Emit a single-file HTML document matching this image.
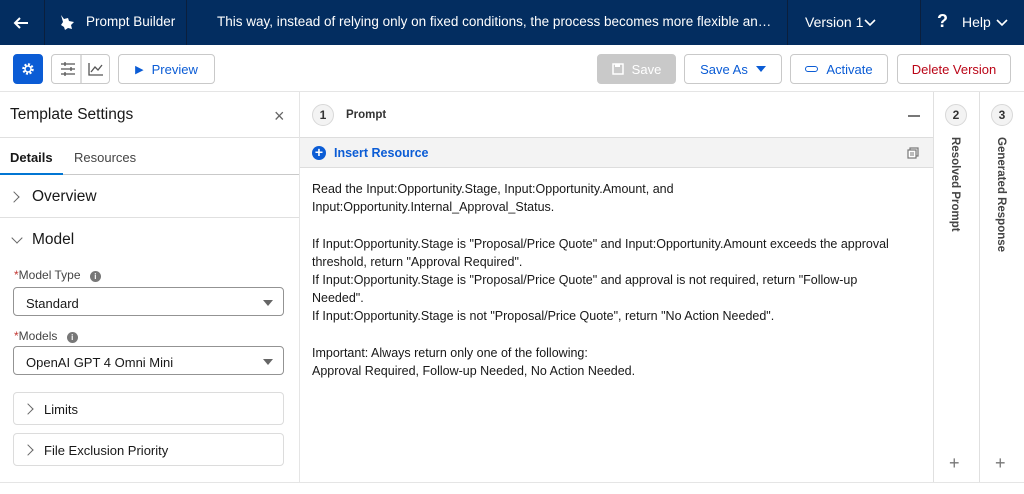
<!DOCTYPE html>
<html><head><meta charset="utf-8"><style>
*{box-sizing:border-box;margin:0;padding:0}
body{width:1024px;height:494px;overflow:hidden;background:#fff;font-family:"Liberation Sans",Arial,sans-serif;color:#181818;position:relative}
.abs{position:absolute}
.hdr{left:0;top:0;width:1024px;height:45px;background:#032d60;color:#fff;font-size:14px}
.hdr .sep{position:absolute;top:0;width:1px;height:45px;background:#0b1f3d}
.hdr span{position:absolute;top:14px;white-space:nowrap}
.btn{position:absolute;top:54px;height:30px;border:1px solid #c9c9c9;border-radius:4px;background:#fff;font-size:13px;color:#0b5cd5;display:flex;align-items:center;justify-content:center;gap:8px}
.tb{left:0;top:91px;width:1024px;height:1px;background:#e5e5e5}
.lbl{font-size:12px;color:#444}
.sel{position:absolute;left:13px;width:271px;height:29px;border:1px solid #939393;border-radius:4px;font-size:13px;padding:8px 12px}
.sel:after{content:"";position:absolute;right:10px;top:12px;border-left:5px solid transparent;border-right:5px solid transparent;border-top:6px solid #666}
.box{position:absolute;left:13px;width:271px;height:33px;border:1px solid #dcdcdc;border-radius:4px;font-size:13px;padding:9px 0 0 30px}
.chev{position:absolute;width:8px;height:8px;border-right:1.5px solid #666;border-bottom:1.5px solid #666}
.txt{left:312px;top:180px;font-size:12.5px;line-height:18.2px;color:#181818;white-space:pre}
.circ{position:absolute;width:22px;height:22px;border-radius:50%;border:1px solid #d8d8d8;background:#f3f3f3;font-size:12px;font-weight:bold;text-align:center;line-height:20px;color:#333}
.vt{position:absolute;writing-mode:vertical-rl;font-size:11.5px;font-weight:bold;color:#444}
</style></head><body>
<div class="abs hdr">
 <div class="sep" style="left:44px"></div><div class="sep" style="left:186px"></div><div class="sep" style="left:787px"></div><div class="sep" style="left:920px"></div>
 <svg class="abs" style="left:12px;top:14px" width="18" height="18" viewBox="0 0 18 18"><path d="M16 9H3M8 4L3 9l5 5" stroke="#fff" stroke-width="2" fill="none"/></svg>
 <svg class="abs" style="left:58px;top:13px" width="18" height="18" viewBox="0 0 18 18"><path d="M3 2l3 4 4-1 1 3 5 1-3 3 1 4-4-1-3 2-1-3-3-2 2-3z" fill="#fff"/></svg>
 <span style="left:86px;font-size:13.5px">Prompt Builder</span>
 <span style="left:217px;width:555px;overflow:hidden;text-overflow:ellipsis;font-size:13.5px">This way, instead of relying only on fixed conditions, the process becomes more flexible and capable of handling</span>
 <span style="left:805px">Version 1</span>
 <svg class="abs" style="left:864px;top:19px" width="12" height="8"><path d="M1 1l5 5 5-5" stroke="#fff" stroke-width="1.6" fill="none"/></svg>
 <span style="left:937px;font-size:18px;top:11px;font-weight:bold">?</span>
 <span style="left:962px">Help</span>
 <svg class="abs" style="left:996px;top:19px" width="12" height="8"><path d="M1 1l5 5 5-5" stroke="#fff" stroke-width="1.6" fill="none"/></svg>
</div>
<div class="btn" style="left:13px;width:30px;background:#0b5cd5;border-color:#0b5cd5"><svg width="14" height="14" viewBox="0 0 14 14"><circle cx="7" cy="7" r="4.5" fill="none" stroke="#fff" stroke-width="2.5" stroke-dasharray="2 1.5"/><circle cx="7" cy="7" r="3" fill="none" stroke="#fff" stroke-width="1.5"/></svg></div>
<div class="btn" style="left:51px;width:59px;color:#555"><svg width="58" height="28"><g stroke="#555" stroke-width="1.3"><path d="M9 9h14M9 14h14M9 19h14M13 7v4M19 12v4M13 17v4"/><path d="M29 0v28" stroke="#c9c9c9"/><path d="M37 8v12h14M39 17l4-5 3 3 4-5" fill="none"/></g></svg></div>
<div class="btn" style="left:118px;width:97px"><span style="font-size:11px">▶</span>Preview</div>
<div class="btn" style="left:597px;width:79px;background:#c9c9c9;border-color:#c9c9c9;color:#fff">
<svg width="12" height="12"><rect x="1" y="1" width="10" height="10" fill="none" stroke="#fff" stroke-width="1.5"/><rect x="3" y="1" width="5" height="3" fill="#fff"/></svg>Save</div>
<div class="btn" style="left:684px;width:98px">Save As <span style="border-left:5px solid transparent;border-right:5px solid transparent;border-top:6px solid #0b5cd5"></span></div>
<div class="btn" style="left:790px;width:98px"><span style="width:13px;height:6px;border:1.5px solid #0b5cd5;border-radius:3px"></span>Activate</div>
<div class="btn" style="left:897px;width:114px;color:#ba0517">Delete Version</div>
<div class="abs tb"></div>

<div class="abs" style="left:299px;top:92px;width:1px;height:390px;background:#e5e5e5"></div>
<div class="abs" style="left:0;top:482px;width:1024px;height:1px;background:#e5e5e5"></div>
<div class="abs" style="left:10px;top:106px;font-size:15.5px">Template Settings</div>
<div class="abs" style="left:274px;top:106px;font-size:18px;color:#666">×</div>
<div class="abs" style="left:0;top:137px;width:299px;height:1px;background:#e0e0e0"></div>
<div class="abs" style="left:10px;top:150px;font-size:13px;font-weight:bold">Details</div>
<div class="abs" style="left:74px;top:150px;font-size:13px;color:#444">Resources</div>
<div class="abs" style="left:0;top:174px;width:299px;height:1px;background:#c9c9c9"></div>
<div class="abs" style="left:0;top:173px;width:63px;height:2px;background:#0176d3"></div>
<div class="chev" style="left:10px;top:193px;transform:rotate(-45deg)"></div>
<div class="abs" style="left:32px;top:188px;font-size:15.5px">Overview</div>
<div class="abs" style="left:0;top:217px;width:299px;height:1px;background:#e0e0e0"></div>
<div class="chev" style="left:13px;top:234px;transform:rotate(45deg)"></div>
<div class="abs" style="left:32px;top:231px;font-size:15.5px">Model</div>
<div class="abs lbl" style="left:14px;top:268px"><span style="color:#c23934">*</span>Model Type <span style="display:inline-block;width:11px;height:11px;border-radius:50%;background:#777;color:#fff;font-size:8px;text-align:center;line-height:11px;margin-left:6px;font-weight:bold">i</span></div>
<div class="sel" style="top:287px">Standard</div>
<div class="abs lbl" style="left:14px;top:329px"><span style="color:#c23934">*</span>Models <span style="display:inline-block;width:11px;height:11px;border-radius:50%;background:#777;color:#fff;font-size:8px;text-align:center;line-height:11px;margin-left:6px;font-weight:bold">i</span></div>
<div class="sel" style="top:346px">OpenAI GPT 4 Omni Mini</div>
<div class="box" style="top:392px">Limits</div>
<div class="chev" style="left:24px;top:405px;transform:rotate(-45deg)"></div>
<div class="box" style="top:433px">File Exclusion Priority</div>
<div class="chev" style="left:24px;top:446px;transform:rotate(-45deg)"></div>

<div class="circ" style="left:312px;top:104px">1</div>
<div class="abs" style="left:346px;top:109px;font-size:11.5px;font-weight:bold;color:#333">Prompt</div>
<div class="abs" style="left:908px;top:115px;width:12px;height:1.5px;background:#777"></div>
<div class="abs" style="left:300px;top:137px;width:633px;height:31px;background:#f3f3f3;border-top:1px solid #ddd;border-bottom:1px solid #ddd"></div>
<div class="abs" style="left:312px;top:146px;width:14px;height:14px;border-radius:50%;background:#0b5cd5;color:#fff;font-size:14px;line-height:13px;text-align:center;font-weight:bold">+</div>
<div class="abs" style="left:334px;top:146px;font-size:12.5px;font-weight:bold;color:#0b5cd5">Insert Resource</div>
<svg class="abs" style="left:907px;top:147px" width="12" height="12"><rect x="3" y="1" width="8" height="8" fill="none" stroke="#777" stroke-width="1.2"/><rect x="1" y="3" width="8" height="8" fill="#fff" stroke="#777" stroke-width="1.2"/><path d="M3 6h4M3 8h4" stroke="#777"/></svg>
<div class="abs txt">Read the Input:Opportunity.Stage, Input:Opportunity.Amount, and
Input:Opportunity.Internal_Approval_Status.

If Input:Opportunity.Stage is "Proposal/Price Quote" and Input:Opportunity.Amount exceeds the approval
threshold, return "Approval Required".
If Input:Opportunity.Stage is "Proposal/Price Quote" and approval is not required, return "Follow-up
Needed".
If Input:Opportunity.Stage is not "Proposal/Price Quote", return "No Action Needed".

Important: Always return only one of the following:
Approval Required, Follow-up Needed, No Action Needed.</div>

<div class="abs" style="left:933px;top:92px;width:1px;height:390px;background:#e0e0e0"></div>
<div class="abs" style="left:979px;top:92px;width:1px;height:390px;background:#e0e0e0"></div>
<div class="circ" style="left:945px;top:104px">2</div>
<div class="circ" style="left:991px;top:104px">3</div>
<div class="vt" style="left:949px;top:137px">Resolved Prompt</div>
<div class="vt" style="left:995px;top:137px">Generated Response</div>
<div class="abs" style="left:949px;top:453px;font-size:18px;color:#777">+</div>
<div class="abs" style="left:995px;top:453px;font-size:18px;color:#777">+</div>
</body></html>
